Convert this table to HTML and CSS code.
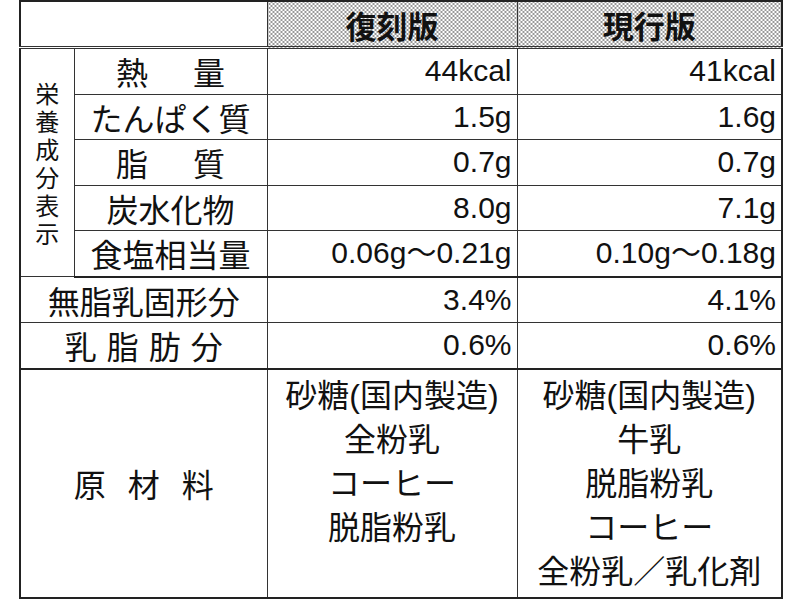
FILE: index.html
```html
<!DOCTYPE html>
<html lang="ja">
<head>
<meta charset="utf-8">
<link rel="stylesheet" href="styles.css">
</head>
<body>
<table class="nut">
  <colgroup><col class="c1"><col class="c2"><col class="c3"><col class="c4"></colgroup>
  <tr class="head">
    <th colspan="2" class="blank"></th>
    <th class="ver">復刻版</th>
    <th class="ver ver2">現行版</th>
  </tr>
  <tr class="row">
    <td rowspan="5" class="vert"><div class="vtext">栄養成分表示</div></td>
    <td class="lbl"><div class="spread g45"><span>熱</span><span>量</span></div></td>
    <td class="val">44kcal</td>
    <td class="val v2">41kcal</td>
  </tr>
  <tr class="row">
    <td class="lbl"><div class="spread">たんぱく質</div></td>
    <td class="val">1.5g</td>
    <td class="val v2">1.6g</td>
  </tr>
  <tr class="row">
    <td class="lbl"><div class="spread g45"><span>脂</span><span>質</span></div></td>
    <td class="val">0.7g</td>
    <td class="val v2">0.7g</td>
  </tr>
  <tr class="row">
    <td class="lbl"><div class="spread">炭水化物</div></td>
    <td class="val">8.0g</td>
    <td class="val v2">7.1g</td>
  </tr>
  <tr class="row thick">
    <td class="lbl"><div class="spread">食塩相当量</div></td>
    <td class="val">0.06g～0.21g</td>
    <td class="val v2">0.10g～0.18g</td>
  </tr>
  <tr class="row">
    <td colspan="2" class="lbl"><div class="spread">無脂乳固形分</div></td>
    <td class="val">3.4%</td>
    <td class="val v2">4.1%</td>
  </tr>
  <tr class="row thick">
    <td colspan="2" class="lbl"><div class="spread g10"><span>乳</span><span>脂</span><span>肪</span><span>分</span></div></td>
    <td class="val">0.6%</td>
    <td class="val v2">0.6%</td>
  </tr>
  <tr class="ing">
    <td colspan="2" class="lbl"><div class="spread g22"><span>原</span><span>材</span><span>料</span></div></td>
    <td class="list">
      <div>砂糖(国内製造)</div>
      <div>全粉乳</div>
      <div>コーヒー</div>
      <div>脱脂粉乳</div>
    </td>
    <td class="list v2">
      <div>砂糖(国内製造)</div>
      <div>牛乳</div>
      <div>脱脂粉乳</div>
      <div>コーヒー</div>
      <div>全粉乳／乳化剤</div>
    </td>
  </tr>
</table>
</body>
</html>
```
FILE: styles.css
```css
html, body {
  margin: 0;
  padding: 0;
  background: #fff;
}
body {
  font-family: "Liberation Sans", "Noto Sans CJK JP", sans-serif;
  color: #111;
}
.nut {
  margin-left: 19px;
  border-collapse: collapse;
  table-layout: fixed;
  width: 762px;
  border: 2px solid #222;
}
.c1 { width: 54px; }
.c2 { width: 193px; }
.c3 { width: 250px; }
.c4 { width: 265px; }

.nut th, .nut td {
  padding: 0;
  border: 1px solid #333;
}
.head th {
  height: 44px;
  border-bottom: 3px double #333;
}
.ver {
  font-family: "Noto Sans CJK JP", sans-serif;
  font-weight: bold;
  font-size: 31px;
  line-height: 1;
  background-color: #fff;
  background-image:
    radial-gradient(circle, #555 0.55px, transparent 0.95px),
    radial-gradient(circle, #555 0.55px, transparent 0.95px);
  background-size: 4px 4px, 4px 4px;
  background-position: 0 0, 2px 2px;
}
.ver2, .v2 {
  border-left-color: #777 !important;
}
.row td {
  height: 44.5px;
}
.thick td {
  border-bottom: 2px solid #222;
}
.vert {
  vertical-align: middle;
}
.vtext {
  width: 24px;
  margin: 0 auto;
  font-family: "Noto Sans CJK JP", sans-serif;
  font-size: 24px;
  line-height: 28px;
  text-align: center;
  word-break: break-all;
}
.lbl {
  font-family: "Noto Sans CJK JP", sans-serif;
  font-size: 32px;
  line-height: 1;
  vertical-align: middle;
}
.spread {
  display: flex;
  justify-content: center;
}
.g45 { gap: 45px; }
.g22 { gap: 22px; }
.g10 { gap: 10px; }
.val {
  font-size: 30px;
  line-height: 1;
  text-align: right;
  padding-right: 5px !important;
  vertical-align: middle;
}
.ing td {
  height: 223px;
}
.list {
  vertical-align: top;
  text-align: center;
  font-size: 32px;
  line-height: 44px;
  padding-top: 4px !important;
}
```
